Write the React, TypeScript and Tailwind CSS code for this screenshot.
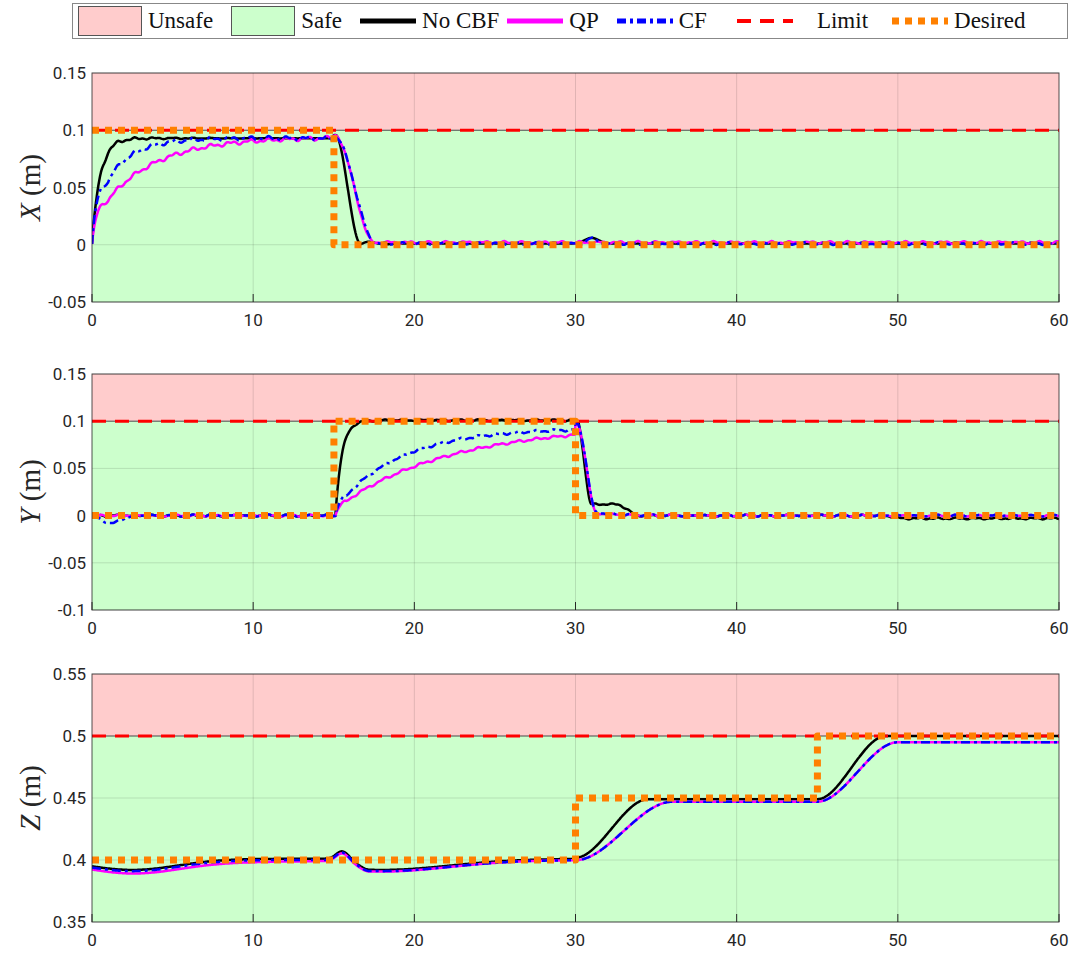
import React from "react";

const X0 = 92;
const X1 = 1059;
const PW = X1 - X0;

const clamp = (v: number) => Math.max(0, Math.min(1, v));
const smooth = (s: number) => {
  const c = clamp(s);
  return c * c * (3 - 2 * c);
};
const wig = (t: number, a: number) => a * (Math.sin(5.3 * t) * 0.6 + Math.sin(12.1 * t + 1) * 0.4);

type Fn = (t: number) => number;

// X axis responses
const xNo: Fn = (t) =>
  t < 15
    ? 0.093 * (1 - Math.exp(-t / 0.5)) + wig(t, 0.0025 * Math.exp(-t / 4))
    : 0.093 * (1 - smooth((t - 15.1) / 1.6)) + 0.002 * Math.sin(3 * t) * Math.exp(-Math.max(0, t - 17)) + 0.001 + 0.005 * Math.exp(-(((t - 31) / 0.6) ** 2));
const xCF: Fn = (t) =>
  t < 15
    ? 0.057 * (1 - Math.exp(-t / 0.3)) + 0.036 * (1 - Math.exp(-Math.max(0, t - 1) / 1.6)) + wig(t, 0.002)
    : 0.093 * (1 - smooth((t - 15.1) / 2.5)) + wig(t, 0.0012) + 0.001 + 0.005 * Math.exp(-(((t - 31) / 0.4) ** 2));
const xQP: Fn = (t) =>
  t < 15
    ? 0.04 * (1 - Math.exp(-t / 0.3)) + 0.054 * (1 - Math.exp(-Math.max(0, t - 1) / 3.3)) + wig(t, 0.002)
    : 0.093 * (1 - smooth((t - 15.1) / 2.4)) + wig(t + 2, 0.0012) + 0.002;
const xDes: Fn = (t) => (t < 15 ? 0.1 : 0);

// Y axis responses
const yNo: Fn = (t) =>
  t < 15
    ? wig(t, 0.001)
    : t < 30
    ? 0.101 * (1 - Math.exp(-Math.max(0, t - 15.1) / 0.4)) + wig(t, 0.001)
    : (t < 31 ? 0.1 - 0.088 * smooth((t - 30.1) / 0.9) : 0.012 * (1 - smooth((t - 32.5) / 1.5))) + wig(t, 0.001) - 0.003 * smooth((t - 49) / 1.5);
const yCF: Fn = (t) =>
  t < 15
    ? -0.008 * Math.exp(-(((t - 1.2) / 0.8) ** 2)) + wig(t, 0.0012)
    : t < 30
    ? 0.022 * (1 - Math.exp(-Math.max(0, t - 15.1) / 0.25)) + 0.071 * (1 - Math.exp(-Math.max(0, t - 15.8) / 4)) + wig(t, 0.0015)
    : 0.093 * (1 - smooth((t - 30.1) / 1.2)) + 0.004 * Math.exp(-Math.max(0, t - 31) / 1.5) + wig(t, 0.001);
const yQP: Fn = (t) =>
  t < 15
    ? wig(t + 1, 0.001)
    : t < 30
    ? 0.016 * (1 - Math.exp(-Math.max(0, t - 15.1) / 0.25)) + 0.08 * (1 - Math.exp(-Math.max(0, t - 15.8) / 7)) + wig(t, 0.0015)
    : 0.093 * (1 - smooth((t - 30.1) / 1.2)) + 0.003 * Math.exp(-Math.max(0, t - 31) / 1.5) + wig(t, 0.001);
const yDes: Fn = (t) => (t >= 15 && t < 30 ? 0.1 : 0);

// Z axis responses
const zBase = (t: number, fast: number) =>
  0.4 -
  0.009 * Math.exp(-(((t - 2.5) / 4) ** 2)) +
  0.006 * Math.exp(-(((t - 15.5) / 0.5) ** 2)) -
  (t > 15.5 ? 0.009 * Math.exp(-(((t - 18) / 6) ** 2)) * smooth((t - 15.7) / 1.5) : 0) +
  0.047 * smooth((t - 30) / (6 - fast)) +
  (0.048 + fast * 0.002) * smooth((t - 45) / (5 - fast * 0.5));
const zNo: Fn = (t) => zBase(t, 1.5) + (t < 30 ? 0.001 : 0.002);
const zCF: Fn = (t) => zBase(t, 0);
const zQP: Fn = (t) => zBase(t, 0) - 0.002 * Math.exp(-(((t - 5) / 10) ** 2));
const zDes: Fn = (t) => (t < 30 ? 0.4 : t < 45 ? 0.45 : 0.5);

type PanelProps = {
  h: number;
  top: number;
  ph: number;
  ymin: number;
  ymax: number;
  ticks: number[];
  label: string;
  limit: number;
  fns: [Fn, Fn, Fn, Fn];
  id: string;
};

const fmt = (v: number) => {
  const r = Math.round(v * 100) / 100;
  return r === 0 ? "0" : String(r);
};

const Panel = ({ h, top, ph, ymin, ymax, ticks, label, limit, fns, id }: PanelProps) => {
  const sx = (t: number) => X0 + (t / 60) * PW;
  const sy = (v: number) => top + ((ymax - v) / (ymax - ymin)) * ph;
  const path = (f: Fn, step = 0.05) => {
    let d = "";
    for (let t = 0; t <= 60.0001; t += step) d += `${d ? "L" : "M"}${sx(t).toFixed(1)},${sy(f(t)).toFixed(1)}`;
    return d;
  };
  const desPath = (f: Fn) => {
    let d = `M${sx(0)},${sy(f(0))}`;
    let prev = f(0);
    for (let t = 0.01; t <= 60; t += 0.01) {
      const v = f(t);
      if (v !== prev) {
        d += `L${sx(t)},${sy(prev)}L${sx(t)},${sy(v)}`;
        prev = v;
      }
    }
    return d + `L${sx(60)},${sy(prev)}`;
  };
  const [no, qp, cf, des] = fns;
  const ly = sy(limit);
  return (
    <svg width={1073} height={h} className="block">
      <defs>
        <clipPath id={id}>
          <rect x={X0} y={top} width={PW} height={ph} />
        </clipPath>
      </defs>
      <rect x={X0} y={top} width={PW} height={ly - top} fill="#ffcccc" />
      <rect x={X0} y={ly} width={PW} height={top + ph - ly} fill="#ccffcc" />
      {[10, 20, 30, 40, 50].map((t) => (
        <line key={t} x1={sx(t)} x2={sx(t)} y1={top} y2={top + ph} stroke="#000" strokeOpacity={0.12} />
      ))}
      {ticks.map((v) => (
        <line key={v} x1={X0} x2={X1} y1={sy(v)} y2={sy(v)} stroke="#000" strokeOpacity={0.12} />
      ))}
      <line x1={X0} x2={X1} y1={ly} y2={ly} stroke="#555" strokeWidth={1} />
      <g clipPath={`url(#${id})`} fill="none" strokeLinejoin="round">
        <path d={path(no)} stroke="#000" strokeWidth={2.5} />
        <path d={path(qp)} stroke="#ff00ff" strokeWidth={2.5} />
        <path d={path(cf)} stroke="#0000ff" strokeWidth={2.5} strokeDasharray="9 4 3 4" />
        <line x1={X0} x2={X1} y1={ly} y2={ly} stroke="#ff0000" strokeWidth={3} strokeDasharray="14 9" />
        <path d={desPath(des)} stroke="#ff8000" strokeWidth={7} strokeDasharray="7 6" />
      </g>
      <rect x={X0} y={top} width={PW} height={ph} fill="none" stroke="#262626" strokeOpacity={0.8} />
      {[0, 10, 20, 30, 40, 50, 60].map((t) => (
        <g key={t}>
          <line x1={sx(t)} x2={sx(t)} y1={top + ph} y2={top + ph - 8} stroke="#262626" />
          <text x={sx(t)} y={top + ph + 24} textAnchor="middle" fontSize={17} fill="#262626" fontFamily="Roboto, sans-serif">
            {t}
          </text>
        </g>
      ))}
      {ticks.map((v) => (
        <text key={v} x={X0 - 6} y={sy(v) + 6} textAnchor="end" fontSize={17} fill="#262626" fontFamily="Roboto, sans-serif">
          {fmt(v)}
        </text>
      ))}
      <text
        transform={`translate(40 ${top + ph / 2}) rotate(-90)`}
        textAnchor="middle"
        fontSize={29}
        fill="#262626"
        fontFamily="'Liberation Serif', serif"
      >
        <tspan fontStyle="italic">{label}</tspan> (m)
      </text>
    </svg>
  );
};

const Swatch = ({ fill }: { fill: string }) => <div className={`h-[30px] w-[64px] border border-[#555] ${fill}`} />;

const LineSw = ({ color, dash, w = 5 }: { color: string; dash?: string; w?: number }) => (
  <svg width={56} height={10}>
    <line x1={0} x2={56} y1={5} y2={5} stroke={color} strokeWidth={w} strokeDasharray={dash} />
  </svg>
);

export default function App() {
  return (
    <div className="w-[1073px] h-[958px] bg-white overflow-hidden">
      <div className="h-[45px] pt-[3px] pl-[72px]">
        <div className="w-[996px] h-[36px] border border-[#888] flex items-center px-[5px] gap-[6px] text-[23px] text-[#111] font-[Liberation_Serif] whitespace-nowrap">
          <Swatch fill="bg-[#ffcccc]" />
          <span className="mr-[12px]">Unsafe</span>
          <Swatch fill="bg-[#ccffcc]" />
          <span className="mr-[12px]">Safe</span>
          <LineSw color="#000" />
          <span className="mr-[2px]">No CBF</span>
          <LineSw color="#ff00ff" />
          <span className="mr-[12px]">QP</span>
          <LineSw color="#0000ff" dash="9 4 3 4" />
          <span className="mr-[24px]">CF</span>
          <LineSw color="#ff0000" dash="14 9" w={4} />
          <span className="ml-[18px] mr-[18px]">Limit</span>
          <LineSw color="#ff8000" dash="7 6" w={7} />
          <span>Desired</span>
        </div>
      </div>
      <Panel id="c1" h={300} top={28} ph={229} ymin={-0.05} ymax={0.15} ticks={[-0.05, 0, 0.05, 0.1, 0.15]} label="X" limit={0.1} fns={[xNo, xQP, xCF, xDes]} />
      <Panel id="c2" h={305} top={29} ph={236} ymin={-0.1} ymax={0.15} ticks={[-0.1, -0.05, 0, 0.05, 0.1, 0.15]} label="Y" limit={0.1} fns={[yNo, yQP, yCF, yDes]} />
      <Panel id="c3" h={308} top={24} ph={248} ymin={0.35} ymax={0.55} ticks={[0.35, 0.4, 0.45, 0.5, 0.55]} label="Z" limit={0.5} fns={[zNo, zQP, zCF, zDes]} />
    </div>
  );
}
